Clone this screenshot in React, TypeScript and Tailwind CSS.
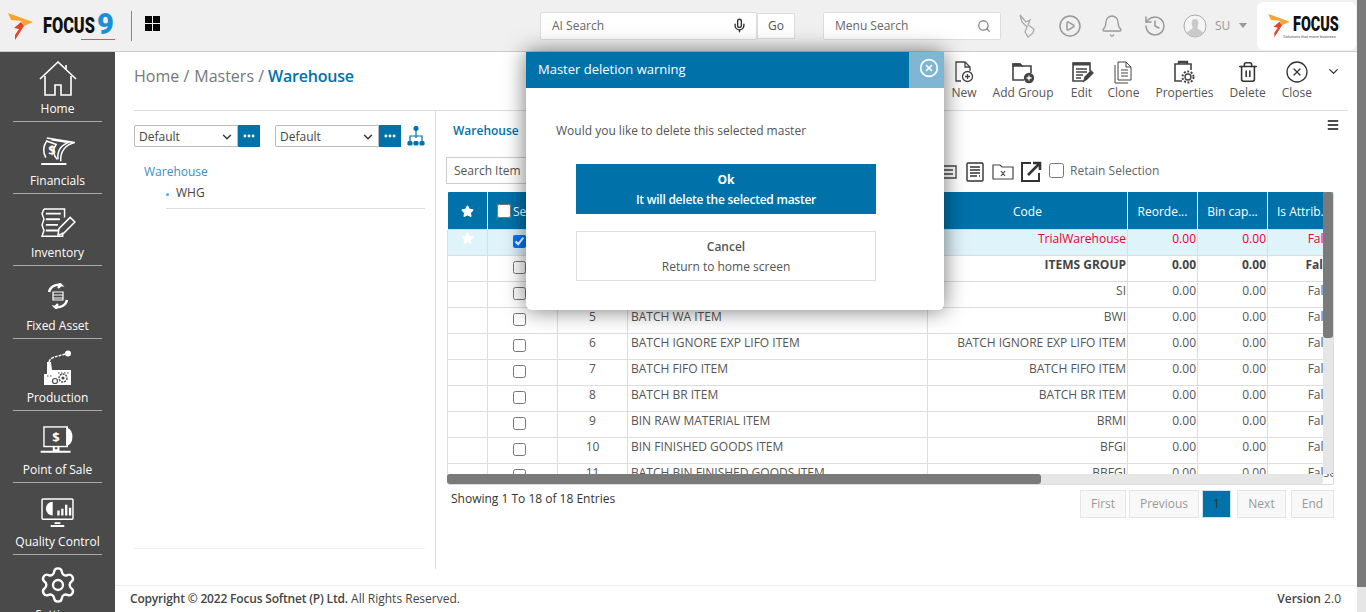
import React from 'react';
import { Bell, ChevronDown, CirclePlay, CircleX, Ellipsis, History, Menu, Mic, Search, Settings, Star, Trash2 } from 'lucide-react';

const Flame = ({ className }: { className: string }) => (
  <svg viewBox="0 0 26 28" className={className}>
    <path d="M0 0 L25 9 L16 13 L13 8 L3 7 Z" fill="#f7a530" />
    <path d="M16 13 L7 27 L7 22 L11 16 L6 15 L13 9 Z" fill="#e2442a" />
  </svg>
);

const SideIcon = ({ name }: { name: string }) => {
  const common = { fill: 'none', stroke: '#fff', strokeWidth: 1.6 };
  if (name === 'Home')
    return (
      <svg viewBox="0 0 38 36" className="h-[36px] w-[38px]" {...common}>
        <path d="M1 18 L19 1 L37 18 M27 8 V4 M6 15 V34 H16 V24 H22 V34 H32 V15" />
      </svg>
    );
  if (name === 'Financials')
    return (
      <svg viewBox="0 0 38 30" className="h-[28px] w-[38px]" {...common}>
        <path d="M7 4 C3 10 3 17 6 22 M6 4 L17 8 C13 13 14 19 18 24" />
        <path d="M7 1 L37 6 C27 8 21 16 22 26 M12 3 L30 6 C22 9 18 15 19 24" />
        <path d="M1 29 H28" strokeWidth="2.2" />
        <text x="8.5" y="19" fill="#fff" stroke="none" fontSize="14" fontWeight="700" fontFamily="Open Sans">$</text>
      </svg>
    );
  if (name === 'Inventory')
    return (
      <svg viewBox="0 0 38 32" className="h-[30px] w-[36px]" {...common}>
        <path d="M4 1 H26 V10 M4 1 L2 6 L4 12 L2 18 L4 24 L2 30 H24 V26" />
        <path d="M6 6 H22 M6 12 H21 M6 18 H19 M6 24 H20" strokeWidth="2" />
        <path d="M20 22 L32 10 L37 15 L25 27 L19 29 Z" />
      </svg>
    );
  if (name === 'Fixed Asset')
    return (
      <svg viewBox="0 0 24 26" className="h-[26px] w-[24px]" {...common}>
        <path d="M3 9 C4 4 9 1 15 2 L13 0 M15 2 L12 5" strokeWidth="2.4" />
        <path d="M21 17 C20 22 15 25 9 24 L11 26 M9 24 L12 21" strokeWidth="2.4" />
        <path d="M7 9 H17 V17 H7 Z M7 12 H17 M7 15 H17" strokeWidth="1.2" />
      </svg>
    );
  if (name === 'Production')
    return (
      <svg viewBox="0 0 30 36" className="h-[36px] w-[30px]">
        <circle cx="25" cy="3.5" r="3" fill="#fff" />
        <path d="M6 12 C8 6 14 7 22 4" fill="none" stroke="#fff" strokeWidth="1.5" strokeDasharray="3 1" />
        <path d="M4 12 H8 L9 20 L28 20 V35 H1 V24 H4 Z" fill="#fff" />
        <circle cx="20" cy="28" r="4" fill="#fff" stroke="#4a4a4a" strokeWidth="1.4" strokeDasharray="2 1" />
        <circle cx="20" cy="28" r="1.6" fill="#4a4a4a" />
        <circle cx="12" cy="31" r="2.5" fill="#fff" stroke="#4a4a4a" strokeWidth="1.2" />
        <path d="M4 26 H9 M15 23 H26" stroke="#4a4a4a" strokeWidth="1" strokeDasharray="1.5 1.5" />
      </svg>
    );
  if (name === 'Point of Sale')
    return (
      <svg viewBox="0 0 38 30" className="h-[28px] w-[37px]" fill="none" stroke="#fff" strokeWidth="1.5">
        <rect x="4.5" y="1" width="25" height="21" />
        <path d="M29 3 C36 3 36 20 29 20 Z" fill="#fff" />
        <path d="M15 22 V26 H20 V22 M1 27.5 H33" strokeWidth="2.2" />
        <text x="13.5" y="17" fill="#fff" stroke="none" fontSize="14" fontWeight="700" fontFamily="Open Sans">$</text>
      </svg>
    );
  if (name === 'Quality Control')
    return (
      <svg viewBox="0 0 34 30" className="h-[29px] w-[33px]" fill="none" stroke="#fff" strokeWidth="1.5">
        <rect x="1" y="1" width="32" height="21" rx="1" />
        <path d="M12 4 A7 7 0 1 0 12 18 L12 11 Z" fill="#fff" stroke="none" />
        <path d="M18 18 V13 M22 18 V11 M26 18 V7 M30 18 V10" strokeWidth="2.4" />
        <path d="M14 26 H20 M10 29 H24" strokeWidth="2" />
      </svg>
    );
  return <Settings size={40} strokeWidth={1.4} color="#fff" />;
};

const sideItems = ['Home', 'Financials', 'Inventory', 'Fixed Asset', 'Production', 'Point of Sale', 'Quality Control', 'Settings'];

const ToolIcon = ({ name }: { name: string }) => {
  const s = { fill: 'none', stroke: '#444', strokeWidth: 1.3 };
  if (name === 'New')
    return (
      <svg viewBox="0 0 22 24" className="h-6 w-[22px]" {...s}>
        <path d="M8 21 H3 V2 H12 L17 7 V11 M12 2 V7 H17" />
        <circle cx="14.5" cy="16.5" r="5" />
        <path d="M14.5 14 V19 M12 16.5 H17" />
      </svg>
    );
  if (name === 'Add Group')
    return (
      <svg viewBox="0 0 24 24" className="h-6 w-6" {...s}>
        <path d="M13 20 H2 V4 H9 L11 6 H20 V13" strokeWidth="1.6" />
        <path d="M2 4 H9 L11 6 H2 Z" fill="#444" />
        <circle cx="18" cy="18" r="4.5" fill="#444" />
        <path d="M18 15.5 V20.5 M15.5 18 H20.5" stroke="#fff" />
      </svg>
    );
  if (name === 'Edit')
    return (
      <svg viewBox="0 0 24 24" className="h-6 w-6" {...s}>
        <path d="M14 21 H3 V3 H20 V11" strokeWidth="1.6" />
        <path d="M3 4 H20" strokeWidth="3" />
        <path d="M6 9 H17 M6 12 H17 M6 15 H13 M6 18 H11" />
        <path d="M14 21 L15 17 L21 11 L23 13 L17 19 Z" fill="#444" />
      </svg>
    );
  if (name === 'Clone')
    return (
      <svg viewBox="0 0 22 24" className="h-6 w-[22px]" {...s} strokeWidth="1">
        <path d="M6 2 H14 L19 7 V20 H6 Z M14 2 V7 H19 M3 5 V23 H16" />
        <path d="M9 10 H16 M9 13 H16 M9 16 H16" />
      </svg>
    );
  if (name === 'Properties')
    return (
      <svg viewBox="0 0 24 24" className="h-6 w-6" {...s}>
        <path d="M10 21 H3 V4 H19 V10" strokeWidth="1.6" />
        <path d="M7 4 V2 H15 V4" strokeWidth="2.4" />
        <circle cx="16" cy="17" r="3" strokeWidth="1.4" />
        <circle cx="16" cy="17" r="5.5" strokeDasharray="2 1.5" strokeWidth="2" />
      </svg>
    );
  if (name === 'Delete') return <Trash2 size={22} strokeWidth={1.7} color="#333" />;
  return <CircleX size={24} strokeWidth={1.3} color="#333" />;
};

const toolItems = ['New', 'Add Group', 'Edit', 'Clone', 'Properties', 'Delete', 'Close'];

const rows = [
  { no: 2, name: '', code: 'TrialWarehouse', selected: true },
  { no: 3, name: '', code: 'ITEMS GROUP', bold: true },
  { no: 4, name: '', code: 'SI' },
  { no: 5, name: 'BATCH WA ITEM', code: 'BWI' },
  { no: 6, name: 'BATCH IGNORE EXP LIFO ITEM', code: 'BATCH IGNORE EXP LIFO ITEM' },
  { no: 7, name: 'BATCH FIFO ITEM', code: 'BATCH FIFO ITEM' },
  { no: 8, name: 'BATCH BR ITEM', code: 'BATCH BR ITEM' },
  { no: 9, name: 'BIN RAW MATERIAL ITEM', code: 'BRMI' },
  { no: 10, name: 'BIN FINISHED GOODS ITEM', code: 'BFGI' },
  { no: 11, name: 'BATCH BIN FINISHED GOODS ITEM', code: 'BBFGI' },
];

function DefaultSelect() {
  return (
    <div className="flex h-[22px] w-[126px]">
      <div className="flex flex-1 items-center justify-between rounded-l-[2px] border border-[#bbb] pl-1 pr-[3px] pt-px text-[12px] text-[#444]">
        Default
        <ChevronDown size={14} strokeWidth={2.4} color="#333" />
      </div>
      <div className="flex w-[22px] items-center justify-center bg-[#0072a9]">
        <Ellipsis size={14} strokeWidth={3} color="#fff" />
      </div>
    </div>
  );
}

export default function App() {
  const td = 'overflow-hidden border border-[#ddd] align-top leading-[18px]';
  const th = 'overflow-hidden whitespace-nowrap border-x border-white pt-[3px] font-normal';
  return (
    <div className="relative flex h-[612px] w-[1366px] overflow-hidden bg-white font-['Open_Sans',sans-serif] text-[12px] text-[#555]">
      <div className="flex w-[1357px] flex-col">
        {/* top bar */}
        <header className="flex h-[52px] shrink-0 items-center border-b border-[#ccc] bg-[#f0f0f0]">
          <Flame className="ml-2 mt-[3px] h-7 w-[26px] shrink-0" />
          <div className="relative ml-[9px] flex w-[72px] shrink-0 items-center font-['Roboto',sans-serif]">
            <span className="inline-block w-[49px] origin-left scale-x-[0.74] text-[22px] font-black leading-none text-[#111]">FOCUS</span>
            <span className="-mt-[3px] ml-[5px] text-[29px] font-black leading-none text-[#1b8fd6]">9</span>
            <div className="absolute left-[38px] top-[26px] h-px w-[34px] bg-[#e0506a]" />
          </div>
          <div className="ml-[16px] h-[30px] w-px bg-[#888]" />
          <div className="ml-[13px] -mt-[4px] grid grid-cols-2 gap-px">
            <div className="h-[7px] w-[7px] bg-black" />
            <div className="h-[7px] w-[7px] bg-black" />
            <div className="h-[7px] w-[7px] bg-black" />
            <div className="h-[7px] w-[7px] bg-black" />
          </div>
          <div className="ml-[380px] flex h-7 w-[217px] items-center justify-between rounded-[2px] border border-[#ddd] bg-white pl-[11px] pr-[9px] text-[#666]">
            AI Search
            <Mic size={15} strokeWidth={2.2} color="#333" />
          </div>
          <div className="flex h-[26px] w-[38px] items-center justify-center border border-[#ddd] bg-white text-[#555]">Go</div>
          <div className="ml-[28px] flex h-7 w-[178px] items-center justify-between rounded-[2px] border border-[#ddd] bg-white pl-[11px] pr-[9px] text-[#666]">
            Menu Search
            <Search size={14} strokeWidth={2.2} color="#888" />
          </div>
          <svg viewBox="0 0 20 24" className="ml-[16px] h-6 w-5" fill="none" stroke="#aaa" strokeWidth="1.3">
            <path d="M3 1 L9 8 L13 6 L11 11 L17 15 L16 19 L11 23 L8 18 L10 13 L5 8 Z" />
          </svg>
          <CirclePlay className="ml-[21px]" size={24} strokeWidth={1.5} color="#999" />
          <Bell className="ml-[18px]" size={24} strokeWidth={1.3} color="#999" />
          <History className="ml-[19px]" size={24} strokeWidth={1.5} color="#999" />
          <svg viewBox="0 0 24 24" className="ml-[16px] h-6 w-6">
            <circle cx="12" cy="12" r="11" fill="#f5f5f5" stroke="#aaa" />
            <path d="M12 5 C15 5 16 8 15 11 C14.5 13 14 14 15 15 C17 16 19 17 20 19 C15 24 9 24 4 19 C5 17 7 16 9 15 C10 14 9.500 13 9 11 C8 8 9 5 12 5 Z" fill="#c9c9c9" />
          </svg>
          <span className="ml-[8px] text-[#999]">SU</span>
          <div className="ml-[9px] h-0 w-0 border-x-[4px] border-t-[5px] border-x-transparent border-t-[#999]" />
          <div className="ml-[10px] flex h-12 w-[99px] items-center rounded-md bg-white pl-[11px]">
            <Flame className="h-[24px] w-[23px] shrink-0" />
            <div className="ml-[2px] mt-[3px] flex w-[46px] flex-col items-start font-['Roboto',sans-serif]">
              <span className="inline-block h-[17px] origin-left scale-x-[0.72] text-[20px] font-black leading-[17px] text-[#111]">FOCUS</span>
              <span className="-ml-[10px] mt-[1px] whitespace-nowrap text-[4px] leading-[5px] text-[#555]">Solutions that move business</span>
            </div>
          </div>
        </header>

        <div className="flex min-h-0 flex-1">
          {/* left nav */}
          <nav className="w-[115px] shrink-0 overflow-hidden bg-[#4a4a4a]">
            {sideItems.map((item) => (
              <div key={item} className="mx-[13px] flex h-[72.2px] flex-col items-center justify-end border-b border-[#aaa] pb-[4px] text-white first:h-[70px] last:border-b-0">
                <div className="flex h-[42px] w-full items-center justify-center pb-[2px]">
                  <SideIcon name={item} />
                </div>
                <span className="h-[16px] whitespace-nowrap text-[12px] leading-[16px]">{item}</span>
              </div>
            ))}
          </nav>

          <div className="flex min-w-0 flex-1 flex-col">
            <main className="min-h-0 flex-1 overflow-hidden pl-[19px] pr-[9px]">
              {/* breadcrumb + actions */}
              <div className="flex h-[59px] justify-between border-b border-[#ddd] pr-[7px]">
                <div className="pt-[12px] text-[16px] leading-[24px] text-[#777]">
                  Home /<span className="ml-[5px]">Masters /</span>
                  <span className="ml-[4px] font-semibold tracking-[-0.2px] text-[#0072a9]">Warehouse</span>
                </div>
                <div className="flex gap-4 pt-[8px]">
                  {toolItems.map((t) => (
                    <div key={t} className="flex flex-col items-center [&:nth-child(4)]:-ml-[2px]">
                      <div className="flex h-[24px] items-center">
                        <ToolIcon name={t} />
                      </div>
                      <span className="whitespace-nowrap text-[#555]">{t}</span>
                    </div>
                  ))}
                  <ChevronDown className="-ml-[2px] mt-[4px]" size={15} strokeWidth={2} color="#333" />
                </div>
              </div>

              <div className="flex h-[458px]">
                {/* tree panel */}
                <div className="flex w-[302px] shrink-0 flex-col border-r border-[#ddd] pr-[10px] pt-[14px]">
                  <div className="flex items-center">
                    <DefaultSelect />
                    <div className="ml-[15px]">
                      <DefaultSelect />
                    </div>
                    <svg viewBox="0 0 18 20" className="ml-[6px] h-5 w-[18px]" fill="none" stroke="#0072a9" strokeWidth="1.2">
                      <circle cx="9" cy="2.500" r="2" fill="#0072a9" />
                      <path d="M9 4 V12 M3 16 V10 H15 V16" />
                      <rect x="1" y="15.500" width="4" height="3.500" rx="1" fill="#0072a9" />
                      <rect x="7" y="15.500" width="4" height="3.500" rx="1" fill="#0072a9" />
                      <rect x="13" y="15.500" width="4" height="3.500" rx="1" fill="#0072a9" />
                    </svg>
                  </div>
                  <div className="ml-[10px] mt-[16px] text-[#3a8fbf]">Warehouse</div>
                  <div className="ml-[32px] mt-[3px] flex h-[25px] items-start border-b border-[#ddd]">
                    <div className="mt-[9px] h-[3px] w-[3px] rounded-full bg-[#3db5ea]" />
                    <span className="ml-[7px] text-[#444]">WHG</span>
                  </div>
                  <div className="mb-[20px] mt-auto border-b border-[#eee]" />
                </div>

                {/* grid panel */}
                <div className="min-w-0 flex-1 pl-[11px] pr-[14px]">
                  <div className="flex h-[46px] items-start justify-between pt-[11px]">
                    <span className="ml-[6px] font-semibold text-[#0072a9]">Warehouse</span>
                    <Menu className="-mr-[6px] -mt-[4px]" size={14} strokeWidth={2.6} color="#111" />
                  </div>
                  <div className="flex h-[35px] items-start">
                    <div className="-ml-px flex h-[27px] w-[300px] items-center border border-[#ccc] pl-[7px] text-[#555]">Search Item</div>
                    <div className="ml-[194px] mt-[4px] flex items-center gap-[8px]">
                      <svg viewBox="0 0 18 18" className="h-[18px] w-[18px]" fill="none" stroke="#444" strokeWidth="1.3">
                        <path d="M1 3 H16 V15 H1 M4 7 H13 M4 11 H13" />
                      </svg>
                      <svg viewBox="0 0 18 20" className="h-5 w-[18px]" fill="none" stroke="#333" strokeWidth="1.4">
                        <rect x="1" y="1" width="16" height="18" rx="1" />
                        <path d="M4 5 H14 M4 8 H14 M4 11 H14 M4 14 H11 M13 14 H14" strokeWidth="1.5" />
                      </svg>
                      <svg viewBox="0 0 22 16" className="h-4 w-[22px]" fill="none" stroke="#444" strokeWidth="1.2">
                        <path d="M1 15 V1 H8 L10 3 H21 V15 Z M9 7 L13 12 M13 7 L9 12" />
                      </svg>
                      <svg viewBox="0 0 22 22" className="-ml-[2px] h-[22px] w-[22px]" fill="none" stroke="#333" strokeWidth="2">
                        <path d="M11 2 H2 V20 H19 V12" />
                        <path d="M8 14 L19 3 M13 2 H20 V9" stroke="#333" strokeWidth="2.6" />
                      </svg>
                      <input type="checkbox" className="-ml-px -mt-[3px] h-[15px] w-[15px]" />
                      <span className="-ml-[2px] -mt-[3px] text-[#666]">Retain Selection</span>
                    </div>
                  </div>

                  {/* table */}
                  <div className="relative h-[293px] w-[887px] overflow-hidden rounded-[2px] border-r border-b border-[#ddd]">
                    <table className="w-[890px] table-fixed border-collapse">
                      <colgroup>
                        <col className="w-[40px]" />
                        <col className="w-[70px]" />
                        <col className="w-[70px]" />
                        <col className="w-[300px]" />
                        <col className="w-[200px]" />
                        <col className="w-[70px]" />
                        <col className="w-[70px]" />
                        <col className="w-[70px]" />
                      </colgroup>
                      <thead>
                        <tr className="h-[37px] bg-[#0072a9] text-white">
                          <th className={th}><Star className="mx-auto" size={13} fill="#fff" color="#fff" /></th>
                          <th className={`${th} pl-[9px] text-left`}><input type="checkbox" className="mr-[2px] h-[14px] w-[14px] align-[-2px]" />Select</th>
                          <th className={th}>No</th>
                          <th className={th}>Name</th>
                          <th className={th}>Code</th>
                          <th className={th}>Reorde...</th>
                          <th className={th}>Bin cap...</th>
                          <th className={`${th} pl-[9px] text-left`}>Is Attrib...</th>
                        </tr>
                      </thead>
                      <tbody>
                        {rows.map((r) => {
                          const tone = r.selected ? 'text-[#e8002a]' : r.bold ? 'font-bold text-[#444]' : '';
                          return (
                            <tr key={r.no} className={`h-[26px] ${r.selected ? 'bg-[#dff3fb]' : ''}`}>
                              <td className={`${td} text-center`}>
                                {r.selected && <Star className="mx-auto mt-[2px]" size={13} fill="#fff" color="#fff" />}
                              </td>
                              <td className={`${td} pl-[25px]`}>
                                <input type="checkbox" defaultChecked={r.selected} className="mt-[5px] block h-[13px] w-[13px]" />
                              </td>
                              <td className={`${td} text-center`}>{r.no}</td>
                              <td className={`${td} whitespace-nowrap pl-[3px]`}>{r.name}</td>
                              <td className={`${td} pr-[1px] text-right whitespace-nowrap ${tone}`}>{r.code}</td>
                              <td className={`${td} pr-[1px] text-right ${tone}`}>0.00</td>
                              <td className={`${td} pr-[1px] text-right ${tone}`}>0.00</td>
                              <td className={`${td} pr-[1px] text-right ${tone}`}>False</td>
                            </tr>
                          );
                        })}
                      </tbody>
                    </table>
                    {/* scrollbars */}
                    <div className="absolute right-0 top-0 h-[282px] w-[10px] rounded-[3px] bg-[#e6e6e6]">
                      <div className="h-[146px] rounded-[3px] bg-[#7a7a7a]" />
                    </div>
                    <div className="absolute bottom-0 left-0 h-[10px] w-[876px] rounded-[3px] bg-[#e6e6e6]">
                      <div className="h-[10px] w-[594px] rounded-[3px] bg-[#7a7a7a]" />
                    </div>
                  </div>

                  <div className="mt-[5px] flex items-start justify-between">
                    <span className="ml-[4px] text-[#333]">Showing 1 To 18 of 18 Entries</span>
                    <div className="flex text-[#999]">
                      <div className="flex h-[28px] w-[46px] items-center justify-center border border-[#e5e5e5] bg-[#f8f8f8]">First</div>
                      <div className="ml-[3px] flex h-[28px] w-[70px] items-center justify-center border border-[#e5e5e5] bg-[#f8f8f8]">Previous</div>
                      <div className="ml-[3px] flex h-[28px] w-[29px] items-center justify-center border border-[#cfe3ee] bg-[#0072a9] text-[#333]">1</div>
                      <div className="ml-[6px] flex h-[28px] w-[49px] items-center justify-center border border-[#e5e5e5] bg-[#f8f8f8]">Next</div>
                      <div className="ml-[5px] flex h-[28px] w-[43px] items-center justify-center border border-[#e5e5e5] bg-[#f8f8f8]">End</div>
                    </div>
                  </div>
                </div>
              </div>
            </main>

            <footer className="flex h-[27px] shrink-0 items-center justify-between border-t border-[#eee] pl-[15px] pr-[16px] text-[#444]">
              <span><span className="font-semibold tracking-[-0.18px]">Copyright © 2022 Focus Softnet (P) Ltd.</span> All Rights Reserved.</span>
              <span><span className="font-semibold">Version</span> 2.0</span>
            </footer>
          </div>
        </div>
      </div>

      {/* page scrollbar */}
      <div className="w-[9px] bg-[#e6e6e6]">
        <div className="h-[587px] bg-[#7a7a7a]" />
      </div>

      {/* deletion dialog */}
      <div className="absolute left-[526px] top-[52px] h-[258px] w-[418px] rounded-b-md bg-white shadow-[0_0_22px_rgba(0,0,0,0.55)]">
        <div className="flex h-[36px] items-center justify-between bg-[#0072a9] pl-[12px] text-[13px] text-white">
          Master deletion warning
          <div className="flex h-full w-[35px] items-center justify-center bg-[#7fb6d3] pb-[5px] pl-[5px]">
            <CircleX size={20} strokeWidth={2} color="#fff" />
          </div>
        </div>
        <p className="ml-[30px] mt-[34px] leading-[18px] text-[#555]">Would you like to delete this selected master</p>
        <div className="ml-[50px] mt-[24px] flex h-[50px] w-[300px] flex-col items-center justify-center gap-[3px] bg-[#0072a9] text-white">
          <span className="font-bold leading-[17px]">Ok</span>
          <span className="font-semibold leading-[17px] tracking-[-0.25px]">It will delete the selected master</span>
        </div>
        <div className="ml-[50px] mt-[17px] flex h-[50px] w-[300px] flex-col items-center justify-center gap-[3px] border border-[#ddd] text-[#555]">
          <span className="font-semibold leading-[17px]">Cancel</span>
          <span className="leading-[17px]">Return to home screen</span>
        </div>
      </div>
    </div>
  );
}
